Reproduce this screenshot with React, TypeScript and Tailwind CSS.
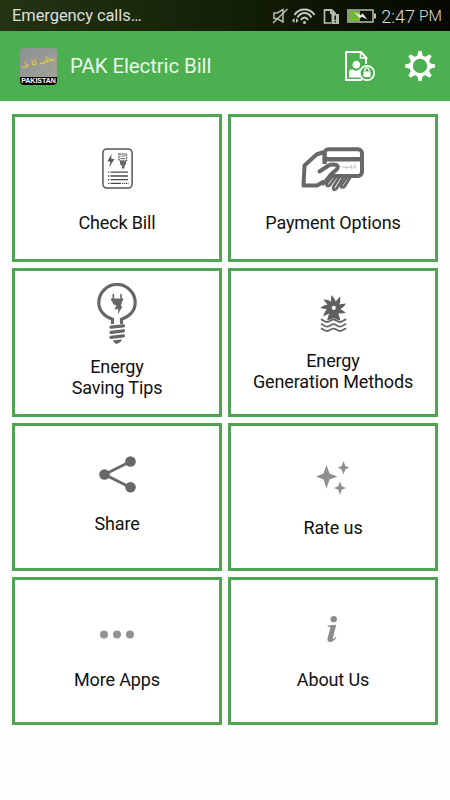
import { FC, ReactNode } from "react";

interface Tile {
    label: string[];
    icon: ReactNode;
    iconClass: string;
    labelClass: string;
}

const BillIcon = () => (
    <svg width="31" height="41" viewBox="0 0 31 41" fill="none">
        <rect x="0.9" y="0.9" width="29.2" height="39.2" rx="4" stroke="#555" strokeWidth="1.5" />
        <path d="M9.5 6 L5.5 13.5 H8.5 L7 19.5 L12.5 11 H9.3 Z" fill="#555" />
        <path d="M17 6H24.5V12.5H17Z" stroke="#777" strokeWidth="1.6" strokeDasharray="2 .7" />
        <path d="M18.5 8H23M18.5 10.5H23" stroke="#777" strokeWidth="1.2" />
        <path d="M18 13H24V16L22.5 18V20.5H20V18L18 16Z" fill="#666" />
        <path d="M8.5 24.2H26M8.5 28H26M8.5 31.6H26M8.5 35.3H19" stroke="#4a4a4a" strokeWidth="1.3" />
        <path d="M6 24.2H7.3M6 28H7.3M6 31.6H7.3M6 35.3H7.3" stroke="#4a4a4a" strokeWidth="1.3" />
        <path d="M20 35.3H26.5" stroke="#4a4a4a" strokeWidth="1.3" strokeDasharray="1.3 .7" />
    </svg>
);

const PaymentIcon = () => (
    <svg width="64" height="46" viewBox="0 0 64 46" fill="none" stroke="#686868" strokeLinecap="round" strokeLinejoin="round">
        <rect x="23.5" y="2.2" width="37.5" height="26.8" rx="4" strokeWidth="4" />
        <path d="M23.5 12.3H61" strokeWidth="4.6" strokeLinecap="butt" />
        <path d="M40 20h3M45 19v3M44 20.5h4M50 18l1 4M48.5 20h6M54 17v4" stroke="#bbb" strokeWidth=".8" />
        <path
            d="M2.5 39.5L3.5 18.5L14.5 7.5L21.5 5V15C25 18 31 16 34.5 16.5C37.5 17 37.5 20.5 35 22.5L28 27L24.5 34L19 39.5Z"
            fill="#fff"
            stroke="none"
        />
        <path d="M23.5 4.5V17" strokeWidth="4" strokeLinecap="butt" />
        <path d="M21.5 5.5L15.5 7.5L3.5 18.5L2.5 38.5H16L22 35" strokeWidth="4" />
        <path d="M18.5 24.5L27.5 18.5C30 17.2 35 17 36.5 19C38 21.5 34.5 23.5 32 25.5C27.5 29 26.5 34 22 36.5" strokeWidth="4" />
        <path d="M31 30L26 36C24.5 38.5 27 40 29 38L35 30" strokeWidth="2.8" />
        <path d="M38.5 30L32.5 39.5C31 43 34 43.8 36 41L42.5 30" strokeWidth="2.8" />
        <path d="M46 30L40.5 38C39 40.5 42 41.5 44 38.8L49.5 30" strokeWidth="2.8" />
    </svg>
);

const BulbIcon = () => (
    <svg width="40" height="61" viewBox="0 0 40 61" fill="none" stroke="#676767">
        <path d="M15.5 41V36.2C7.5 34 1.8 27.5 1.8 19.5A18.2 18 0 0 1 38.2 19.5C38.2 27.5 32.5 34 24.5 36.2V41" strokeWidth="3.2" />
        <path d="M14 44.2L26.5 42.8M14 49.3L26.5 47.8M14 54.3L26.5 52.8" strokeWidth="3.2" strokeLinecap="round" />
        <path d="M15.5 57.5L25 56.2L23.5 59L20.5 60.7H18.5Z" fill="#676767" stroke="none" />
        <path d="M16.3 11V16M24 11V16" strokeWidth="1.6" />
        <path d="M14 15.5H26.2V17.7H25.2C25 20 24.2 21.5 23.8 23.3H25.6L20.8 31.6L21.4 26.3H17.5L19.5 22.6C16.8 22 15.2 20.3 15 17.7H14Z" fill="#676767" stroke="none" />
    </svg>
);

const TurbineIcon = () => (
    <svg width="27" height="37" viewBox="0 0 27 37" fill="none">
        {[0, 40, 80, 120, 160, 200, 240, 280, 320].map((angle) => (
            <path key={angle} d="M10.8 11L11.2 0Q15.8 3.5 16.4 10Z" fill="#606060" transform={`rotate(${angle} 13.5 13)`} />
        ))}
        <path d="M9.5 17H17.5L20.5 25.5H7Z" fill="#606060" />
        <circle cx="13.5" cy="13" r="5.2" fill="#606060" />
        <circle cx="13.8" cy="12.8" r="2.1" fill="#fff" />
        <path
            d="M.8 24.8C3.5 24.8 4 27.3 7 27.3S10.7 24.8 13.5 24.8S17 27.3 20 27.3S23.5 24.8 26.2 24.8"
            stroke="#fff"
            strokeWidth="3.2"
        />
        <path
            d="M.8 24.5C3.5 24.5 4 27 7 27S10.7 24.5 13.5 24.5S17 27 20 27S23.5 24.5 26.2 24.5M.8 29.2C3.5 29.2 4 31.7 7 31.7S10.7 29.2 13.5 29.2S17 31.7 20 31.7S23.5 29.2 26.2 29.2M.8 33.7C3.5 33.7 4 36 7 36S10.7 33.7 13.5 33.7S17 36 20 36S23.5 33.7 26.2 33.7"
            stroke="#686868"
            strokeWidth="1.8"
        />
    </svg>
);

const ShareIcon = () => (
    <svg width="37" height="37" viewBox="0 0 37 37" fill="#686868">
        <path d="M31.5 5.5L5.5 18.5L31.5 31.5" fill="none" stroke="#686868" strokeWidth="2.8" />
        <circle cx="31.5" cy="5.5" r="5.3" />
        <circle cx="5.5" cy="18.5" r="5.3" />
        <circle cx="31.5" cy="31.2" r="5.3" />
    </svg>
);

const StarsIcon = () => (
    <svg width="34" height="34" viewBox="0 0 34 34" fill="#8f8f8f">
        <path d="M10.5 4L13.5 12.5L21.5 15.5L13.5 18.5L10.5 27.5L7.5 18.5L0 15.5L7.5 12.5Z" />
        <path d="M27.5 0L29.3 5L33.5 6.8L29.3 8.6L27.5 13.5L25.7 8.6L21.5 6.8L25.7 5Z" />
        <path d="M24 20.5L25.8 25.3L30 27L25.8 28.8L24 33.8L22.2 28.8L18 27L22.2 25.3Z" />
    </svg>
);

const DotsIcon = () => (
    <svg width="34" height="9" viewBox="0 0 34 9" fill="#929292">
        <circle cx="4" cy="4.5" r="4" />
        <circle cx="17" cy="4.5" r="4" />
        <circle cx="30" cy="4.5" r="4" />
    </svg>
);

const InfoIcon = () => (
    <svg width="12" height="27" viewBox="0 0 12 27" fill="#8c8c8c">
        <ellipse cx="6.7" cy="3.2" rx="3.2" ry="3.1" />
        <path d="M.7 9.6L9.3 8.8L5.8 22.2C5.5 23.6 7 23 8.6 20.8L9.3 21.5C7.6 24.3 5.5 26 3 26C1 26 0 24.7 .6 22.3L3.2 12.2C3.5 11 2.5 10.8 .6 10.7Z" />
    </svg>
);

const tiles: Tile[] = [
    { label: ["Check Bill"], icon: <BillIcon />, iconClass: "mt-[31px]", labelClass: "mt-[23px]" },
    { label: ["Payment Options"], icon: <PaymentIcon />, iconClass: "mt-[30px]", labelClass: "mt-[19px]" },
    { label: ["Energy", "Saving Tips"], icon: <BulbIcon />, iconClass: "mt-[12px]", labelClass: "mt-[12px]" },
    { label: ["Energy", "Generation Methods"], icon: <TurbineIcon />, iconClass: "mt-[24px]", labelClass: "mt-[18px]" },
    { label: ["Share"], icon: <ShareIcon />, iconClass: "mt-[30px]", labelClass: "mt-[20px]" },
    { label: ["Rate us"], icon: <StarsIcon />, iconClass: "mt-[35px]", labelClass: "mt-[22px]" },
    { label: ["More Apps"], icon: <DotsIcon />, iconClass: "mt-[50px]", labelClass: "mt-[30px]" },
    { label: ["About Us"], icon: <InfoIcon />, iconClass: "mt-[36px]", labelClass: "mt-[26px]" },
];

const StatusBar: FC = () => (
    <div className="flex h-[31px] items-center bg-linear-to-r from-[#233413] via-[#142007] to-[#050801] pt-px pr-2 pl-3 text-[#dededa]">
        <span className="text-[16.5px] tracking-[-0.08px]">Emergency calls…</span>
        <div className="ml-auto flex items-center">
            <svg width="16" height="16" viewBox="0 0 16 16" fill="none" stroke="#b9bbb3" strokeWidth="1.5">
                <path d="M2 5H5L11 1.5V14L5 10.5H2Z" />
                <path d="M15.5 1L1 15" />
            </svg>
            <svg className="ml-1" width="24" height="17" viewBox="0 0 24 17" fill="none" stroke="#c5c7bf" strokeWidth="2">
                <path d="M2.5 7C7-.3 18-.3 22.5 7M5.5 9.5C9 3.5 16 3.5 19.5 9.5M9 12C11 8.5 14 8.5 16 12" />
                <circle cx="12.5" cy="14.5" r="1.5" fill="#c5c7bf" stroke="none" />
                <path d="M0 12.5L2.5 10V15ZM6.5 12.5L4 10V15Z" fill="#c5c7bf" stroke="none" />
            </svg>
            <svg className="ml-[7px]" width="17" height="17" viewBox="0 0 17 17" fill="none" stroke="#b9bbb3">
                <path d="M8 15H1.5V2H9L12 5V7" strokeWidth="1.7" />
                <path d="M1.5 2H8V5H12" strokeWidth="2" />
                <rect x="8.5" y="6" width="7.5" height="10" fill="#b9bbb3" stroke="none" />
                <path d="M12.2 7.5V12M12.2 13V14.5" stroke="#1a2410" strokeWidth="1.6" />
            </svg>
            <svg className="ml-[7px]" width="29" height="14" viewBox="0 0 29 14" fill="none">
                <rect x="1" y="1" width="25" height="12" stroke="#b9bbb3" strokeWidth="1.5" />
                <rect x="2" y="2" width="11" height="10" fill="#71b82d" />
                <path d="M27 4.5H29V9.5H27Z" fill="#b9bbb3" />
                <path d="M7 3L14 6.3L15.5 4.3L20.5 10.5L14.5 7.8L13 9.5Z" fill="#e7e9e2" />
            </svg>
            <span className="ml-[5px] text-[18px] font-light">2:47</span>
            <span className="ml-[4px] pt-px text-[15.5px] font-light">PM</span>
        </div>
    </div>
);

const Header: FC = () => (
    <header className="flex h-[70px] items-center bg-[#4caf50] pl-5 pr-[15px]">
        <div className="flex h-[37px] w-[37px] flex-col overflow-hidden rounded-sm bg-linear-to-br from-[#8b9093] to-[#a5a497]">
            <div className="flex h-[29px] shrink-0 items-center justify-center font-['DejaVu_Sans',sans-serif] text-[7.5px] leading-4 whitespace-nowrap text-[#f0dc1c]">
                <span dir="rtl" className="-rotate-12">بجلی کا بل</span>
            </div>
            <div className="flex h-2 items-center justify-center bg-black font-['Liberation_Sans',sans-serif] text-[7px] leading-none font-bold text-white">
                PAKISTAN
            </div>
        </div>
        <h1 className="ml-[13px] text-[20.5px] tracking-[-0.12px] text-[#e9f6e9]">PAK Electric Bill</h1>
        <svg className="ml-auto" width="30" height="31" viewBox="0 0 30 31" fill="none">
            <path d="M21 13V6.5L16 1H1V29H17" stroke="#fff" strokeWidth="2" />
            <path d="M15.5 1V7H21.5Z" stroke="#fff" strokeWidth="1.5" />
            <circle cx="11.3" cy="13.7" r="3.8" fill="#fff" />
            <path d="M4 26.5V21C4 19 5.5 18.5 7.5 18.5L11.3 20L14 18.5H17V26.5Z" fill="#fff" />
            <circle cx="22" cy="22" r="7.2" fill="#4caf50" stroke="#fff" strokeWidth="1.7" />
            <path d="M18.5 20.5H25.5V26H18.5Z" fill="#fff" />
            <path d="M20 20.5V18.7C20 16.2 24 16.2 24 18.7V20.5" stroke="#fff" strokeWidth="1.3" />
        </svg>
        <svg className="ml-[30px]" width="30" height="30" viewBox="0 0 30 30" fill="none">
            <circle cx="15" cy="15" r="8.9" stroke="#fff" strokeWidth="3.4" />
            {[0, 45, 90, 135, 180, 225, 270, 315].map((angle) => (
                <path key={angle} d="M12 6L13.5 0H16.5L18 6Z" fill="#fff" transform={`rotate(${angle} 15 15)`} />
            ))}
        </svg>
    </header>
);

const TileCard: FC<{ tile: Tile }> = ({ tile }) => (
    <button className="flex flex-col items-center border-[3px] border-[#50a554] bg-white">
        <span className={tile.iconClass}>
            <span className="block">{tile.icon}</span>
        </span>
        <span className={`text-[18px] leading-[21px] tracking-[-0.13px] text-[#111] ${tile.labelClass}`}>
            {tile.label.map((line) => (
                <span key={line} className="block text-center">
                    {line}
                </span>
            ))}
        </span>
    </button>
);

export default function App() {
    return (
        <div className="h-[800px] w-[450px] overflow-hidden bg-[#fefefe] font-[Roboto,sans-serif]">
            <StatusBar />
            <Header />

            {/* Menu tiles */}
            <main className="mt-[13px] ml-3 grid h-[611px] w-[426px] grid-cols-2 grid-rows-4 gap-[6px]">
                {tiles.map((tile) => (
                    <TileCard key={tile.label.join(" ")} tile={tile} />
                ))}
            </main>
        </div>
    );
}
